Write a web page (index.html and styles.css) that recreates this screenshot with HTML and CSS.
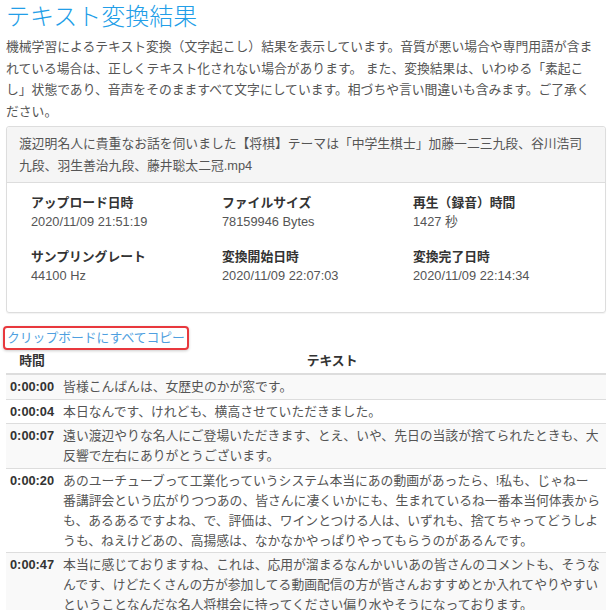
FILE: index.html
```html
<!DOCTYPE html>
<html lang="ja">
  <head>
    <meta charset="UTF-8" />
    <meta name="viewport" content="width=device-width, initial-scale=1.0" />
    <title>テキスト変換結果</title>
    <link rel="stylesheet" href="styles.css">
  </head>
  <body>
    <div class="container">
      <h1 class="page-title">テキスト変換結果</h1>
      <p class="intro">
        機械学習によるテキスト変換（文字起こし）結果を表示しています。音質が悪い場合や専門用語が含まれている場合は、正しくテキスト化されない場合があります。 また、変換結果は、いわゆる「素起こし」状態であり、音声をそのまますべて文字にしています。相づちや言い間違いも含みます。ご了承ください。
      </p>

      <div class="panel">
        <div class="panel-heading">
          渡辺明名人に貴重なお話を伺いました【将棋】テーマは「中学生棋士」加藤一二三九段、谷川浩司九段、羽生善治九段、藤井聡太二冠.mp4
        </div>
        <div class="panel-body">
          <div class="meta-grid">
            <div class="meta-item">
              <div class="meta-label">アップロード日時</div>
              <div class="meta-value">2020/11/09 21:51:19</div>
            </div>
            <div class="meta-item">
              <div class="meta-label">ファイルサイズ</div>
              <div class="meta-value">78159946 Bytes</div>
            </div>
            <div class="meta-item">
              <div class="meta-label">再生（録音）時間</div>
              <div class="meta-value">1427 秒</div>
            </div>
            <div class="meta-item">
              <div class="meta-label">サンプリングレート</div>
              <div class="meta-value">44100 Hz</div>
            </div>
            <div class="meta-item">
              <div class="meta-label">変換開始日時</div>
              <div class="meta-value">2020/11/09 22:07:03</div>
            </div>
            <div class="meta-item">
              <div class="meta-label">変換完了日時</div>
              <div class="meta-value">2020/11/09 22:14:34</div>
            </div>
          </div>
        </div>
      </div>

      <a href="#" class="copy-link">クリップボードにすべてコピー</a>

      <table class="transcript">
        <thead>
          <tr>
            <th class="col-time">時間</th>
            <th>テキスト</th>
          </tr>
        </thead>
        <tbody>
          <tr>
            <td class="col-time">0:00:00</td>
            <td>皆様こんばんは、女歴史のかが窓です。</td>
          </tr>
          <tr>
            <td class="col-time">0:00:04</td>
            <td>本日なんです、けれども、横高させていただきました。</td>
          </tr>
          <tr>
            <td class="col-time">0:00:07</td>
            <td>遠い渡辺やりな名人にご登場いただきます、とえ、いや、先日の当該が捨てられたときも、大反響で左右にありがとうございます。</td>
          </tr>
          <tr>
            <td class="col-time">0:00:20</td>
            <td>あのユーチューブって工業化っていうシステム本当にあの動画があったら、!私も、じゃねー番講評会という広がりつつあの、皆さんに凄くいかにも、生まれているね一番本当何体表からも、あるあるですよね、で、評価は、ワインとつける人は、いずれも、捨てちゃってどうしようも、ねえけどあの、高揚感は、なかなかやっぱりやってもらうのがあるんです。</td>
          </tr>
          <tr>
            <td class="col-time">0:00:47</td>
            <td>本当に感じておりますね、これは、応用が溜まるなんかいいあの皆さんのコメントも、そうなんです、けどたくさんの方が参加してる動画配信の方が皆さんおすすめとか入れてやりやすいということなんだな名人将棋会に持ってください偏り水やそうになっております。</td>
          </tr>
        </tbody>
      </table>
    </div>
  </body>
</html>
```

FILE: styles.css
```css
:root {
  --text: #333;
  --text-muted: #555;
  --title: #229ee8;
  --link: #4f9fe0;
  --border: #ddd;
  --stripe: #f9f9f9;
  --heading-bg: #f5f5f5;
}

* {
  box-sizing: border-box;
}

body {
  margin: 0;
  background: white;
  color: var(--text-muted);
  font-family: "Liberation Sans", "Noto Sans CJK JP", sans-serif;
  font-size: 12.8px;
  line-height: 21.5px;
}

.container {
  padding: 0 6px;
}

.page-title {
  margin: 4px 0 6px;
  color: var(--title);
  font-size: 24px;
  line-height: 26px;
  font-weight: 300;
}

.intro {
  margin: 0 0 4px;
  padding-right: 8px;
}

.panel {
  border: 1px solid var(--border);
  border-radius: 3px;
  box-shadow: 0 1px 1px rgba(0, 0, 0, 0.05);
}

.panel-heading {
  padding: 6px 12px;
  background: var(--heading-bg);
  border-bottom: 1px solid var(--border);
  border-radius: 3px 3px 0 0;
}

.panel-body {
  padding: 10px 12px 27px 24px;
}

.meta-grid {
  display: grid;
  grid-template-columns: repeat(3, 191px);
  row-gap: 16px;
  line-height: 19px;
}

.meta-label {
  color: var(--text);
  font-weight: 700;
}

.copy-link {
  display: inline-block;
  margin: 13px 0 0 -3px;
  padding: 2px 2px;
  line-height: 16px;
  color: var(--link);
  text-decoration: none;
  border: 2px solid #e8383d;
  border-radius: 4px;
  box-shadow: 0 1px 3px rgba(0, 0, 0, 0.2);
}

.transcript {
  width: 100%;
  border-collapse: collapse;
  line-height: 20px;
}

.transcript th,
.transcript td {
  padding: 2px 5px 1.5px 5px;
  vertical-align: top;
  text-align: left;
}

.transcript th {
  padding: 2px 5px 3px;
  line-height: 18px;
  color: var(--text);
  font-weight: 700;
  text-align: center;
  border-bottom: 2px solid var(--border);
}

.transcript td {
  border-top: 1px solid var(--border);
}

.transcript tbody tr:nth-child(odd) {
  background: var(--stripe);
}

.transcript td.col-time {
  width: 52px;
  padding-left: 4px;
  padding-right: 4px;
  color: var(--text);
  font-weight: 700;
  white-space: nowrap;
}
```
